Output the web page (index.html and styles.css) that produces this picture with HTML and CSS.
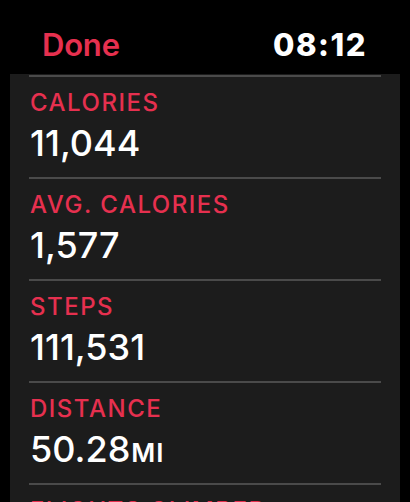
FILE: index.html
```html
<!DOCTYPE html>
<html lang="en">
<head>
    <meta charset="UTF-8">
    <meta name="viewport" content="width=device-width, initial-scale=1.0">
    <title>Workout Summary</title>
    <link rel="stylesheet" href="styles.css">
</head>
<body>
    <div class="topbar">
        <span class="done">Done</span>
        <span class="clock">08:12</span>
    </div>
    <div class="card">
        <div class="stat">
            <div class="label">CALORIES</div>
            <div class="value">11,044</div>
        </div>
        <div class="stat">
            <div class="label">AVG. CALORIES</div>
            <div class="value">1,577</div>
        </div>
        <div class="stat">
            <div class="label">STEPS</div>
            <div class="value">111,531</div>
        </div>
        <div class="stat">
            <div class="label">DISTANCE</div>
            <div class="value">50.28<span class="unit">MI</span></div>
        </div>
        <div class="stat">
            <div class="label">FLIGHTS CLIMBED</div>
            <div class="value">48</div>
        </div>
    </div>
</body>
</html>
```

FILE: styles.css
```css
body {
    font-family: Inter, "Noto Sans", sans-serif;
    margin: 0;
    background: #000;
    width: 410px;
    height: 502px;
    overflow: hidden;
}
.topbar {
    height: 74px;
    display: flex;
    justify-content: space-between;
    align-items: center;
    padding: 14px 43px 0 42px;
    box-sizing: border-box;
}
.done {
    color: #e6304f;
    font-size: 31px;
    font-weight: 600;
    letter-spacing: -0.2px;
}
.clock {
    color: #fff;
    font-size: 31px;
    font-weight: 800;
    letter-spacing: 1.5px;
}
.card {
    margin: 0 10px;
    background: #1c1c1c;
    padding: 1px 19px 0;
    min-height: 428px;
}
.stat {
    border-top: 2px solid #4a4a4a;
    height: 102px;
    padding: 11px 1px 0;
    box-sizing: border-box;
}
.label {
    color: #e6304f;
    font-size: 24px;
    font-weight: 500;
    letter-spacing: 1.5px;
    line-height: 30px;
}
.value {
    color: #fff;
    font-size: 36px;
    font-weight: 500;
    line-height: 42px;
    margin-top: 4px;
}
.unit {
    font-size: 26px;
    font-weight: 600;
    letter-spacing: 1px;
    margin-left: 1px;
}
```
